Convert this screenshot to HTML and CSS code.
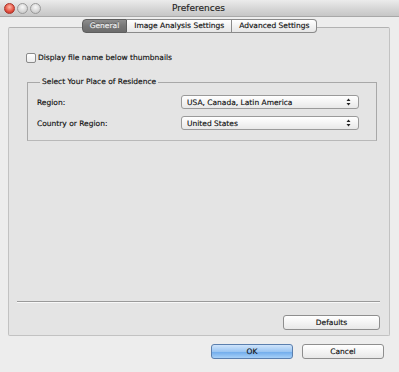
FILE: index.html
```html
<!DOCTYPE html>
<html lang="en">
<head>
    <meta charset="UTF-8">
    <title>Preferences</title>
    <link rel="stylesheet" href="styles.css">
</head>
<body>
    <div class="window">
        <div class="titlebar">
            <div class="lights">
                <span class="light close"></span>
                <span class="light"></span>
                <span class="light"></span>
            </div>
            <div class="title">Preferences</div>
        </div>
        <div class="tabs">
            <span class="tab active">General</span>
            <span class="tab">Image Analysis Settings</span>
            <span class="tab">Advanced Settings</span>
        </div>
        <div class="tabbox">
            <label class="check-row"><span class="checkbox"></span>Display file name below thumbnails</label>
            <fieldset class="group">
                <legend>Select Your Place of Residence</legend>
                <div class="field">
                    <span class="field-label">Region:</span>
                    <div class="popup">USA, Canada, Latin America
                        <svg class="arrows" width="5" height="8" viewBox="0 0 5 8"><path d="M2.5 0.5 L4.5 3 L0.5 3 Z M0.5 5 L4.5 5 L2.5 7.5 Z" fill="#222"/></svg>
                    </div>
                </div>
                <div class="field">
                    <span class="field-label">Country or Region:</span>
                    <div class="popup">United States
                        <svg class="arrows" width="5" height="8" viewBox="0 0 5 8"><path d="M2.5 0.5 L4.5 3 L0.5 3 Z M0.5 5 L4.5 5 L2.5 7.5 Z" fill="#222"/></svg>
                    </div>
                </div>
            </fieldset>
            <div class="spacer"></div>
            <div class="separator"></div>
            <div class="defaults-row">
                <button type="button" class="btn defaults">Defaults</button>
            </div>
        </div>
        <div class="footer">
            <button type="button" class="btn primary">OK</button>
            <button type="button" class="btn">Cancel</button>
        </div>
    </div>
</body>
</html>
```

FILE: styles.css
```css
* { box-sizing: border-box; }
body { margin: 0; font-family: "DejaVu Sans", sans-serif; font-size: 7.5px; color: #111; -webkit-text-stroke: 0.15px; }
.window { width: 399px; height: 372px; background: #ededed; display: flex; flex-direction: column; overflow: hidden; }

.titlebar { height: 17px; border-bottom: 1px solid #a8a8a8; background: linear-gradient(#ececec, #d4d4d4 60%, #c6c6c6); display: flex; align-items: center; }
.lights { display: flex; gap: 2px; padding-left: 4px; }
.light { width: 11px; height: 11px; border-radius: 50%; border: 1px solid #9a9a9a; background: radial-gradient(circle at 50% 35%, #f8f8f8, #d0d0d0 70%, #bababa); }
.light.close { border-color: #a8352c; background: radial-gradient(circle at 50% 35%, #ffb8a8, #e4503f 60%, #b02a20); }
.title { flex: 1; text-align: center; margin-right: 43px; font-size: 9px; color: #222; }

.tabs { display: flex; justify-content: center; margin-top: 2px; position: relative; z-index: 1; height: 14px; }
.tab { height: 14px; line-height: 12px; padding: 0 7px; border: 1px solid #8a8a8a; border-left: none; background: linear-gradient(#ffffff, #f2f2f2 50%, #e6e6e6); color: #111; }
.tab:first-child { border-left: 1px solid #6a6a6a; border-radius: 4px 0 0 4px; }
.tab:last-child { border-radius: 0 4px 4px 0; }
.tab.active { background: linear-gradient(#8e8e8e, #777777 50%, #6c6c6c); border-color: #5e5e5e; color: #f4f4f4; text-shadow: 0 -1px 0 #4a4a4a; }

.tabbox { margin: -6px 9px 0 8px; height: 309px; border: 1px solid #c2c2c2; border-top-color: #b2b2b2; border-radius: 2px; background: #e4e4e4; display: flex; flex-direction: column; padding: 24px 9px 5px 0; }
.check-row { display: flex; align-items: center; gap: 2px; margin-left: 17px; height: 11px; }
.checkbox { width: 10px; height: 10px; border: 1px solid #8a8a8a; border-radius: 2px; background: linear-gradient(#ffffff, #ececec); }

.group { margin: 14px 3px 0 18px; padding: 8px 17px 10px 9px; border: 1px solid #a8a8a8; border-bottom-color: #b8b8b8; display: flex; flex-direction: column; gap: 7px; }
.group legend { padding: 0 2px; margin-left: 3px; line-height: 10px; }
.field { display: flex; align-items: center; }
.field-label { width: 144px; }
.popup { flex: 1; height: 14px; border: 1px solid #9a9a9a; border-radius: 3px; background: linear-gradient(#ffffff, #f4f4f4 50%, #e8e8e8); display: flex; align-items: center; justify-content: space-between; padding: 0 7px 0 5px; }
.arrows { display: block; }

.spacer { flex: 1; }
.separator { height: 2px; margin-left: 8px; background: #9a9a9a; border-bottom: 1px solid #f8f8f8; }
.defaults-row { display: flex; justify-content: flex-end; margin-top: 12px; }

.btn { font-family: "DejaVu Sans", sans-serif; font-size: 7.5px; color: #111; -webkit-text-stroke: 0.15px; height: 15px; width: 97px; padding: 0; border: 1px solid #8e8e8e; border-radius: 3px; background: linear-gradient(#ffffff, #f4f4f4 50%, #e8e8e8); }
.footer { display: flex; justify-content: flex-end; gap: 9px; padding: 8px 15px 0 0; }
.footer .btn { width: 82px; }
.btn.primary { border-color: #5b7fae; background: linear-gradient(#cfe4fb, #9cc6f2 50%, #72adec 55%, #a6d0f8); }
```
